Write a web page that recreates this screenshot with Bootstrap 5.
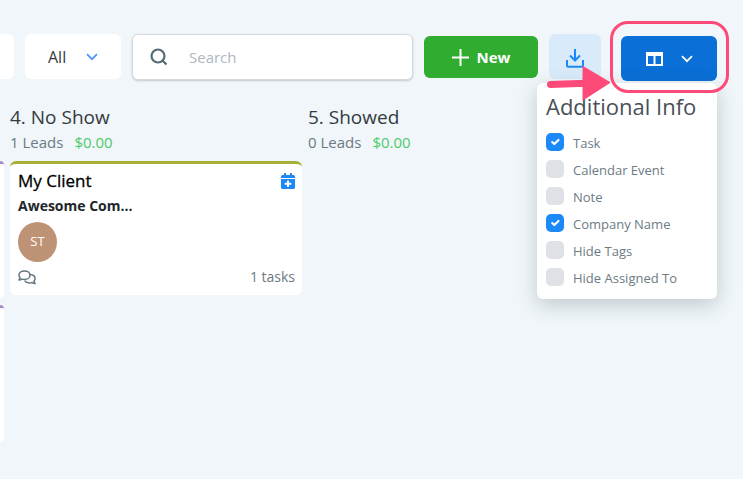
<!DOCTYPE html>
<html lang="en">
<head>
<meta charset="utf-8">
<meta name="viewport" content="width=device-width, initial-scale=1">
<title>Leads board</title>
<link rel="stylesheet" href="https://cdn.jsdelivr.net/npm/bootstrap@5.3.0/dist/css/bootstrap.min.css">
<style>
body { background: #f0f6f9; font-family: "Open Sans", "Noto Sans", sans-serif; color: #343a40; font-size: 14px; min-height: 100vh; overflow-x: hidden; }
.toolbar { padding: 34px 26px 0 0; gap: 11px; height: 82px; align-items: flex-start; }
.tool { border: 0; border-radius: 6px; height: 45px; flex: none; }
.tool-stub { width: 14px; background: #fff; border-radius: 0 6px 6px 0; }
.tool-all { width: 96px; background: #fff; font-size: 16px; color: #343a40; padding: 0 23px; }
.search-box { height: 46px; min-width: 0; background: #fff; border: 1px solid #d3d9df; border-radius: 6px; box-shadow: 0 1px 2px rgba(60, 70, 80, .25); padding: 0 17px; gap: 21px; }
.search-box input { min-width: 0; border: 0; padding: 0; font-size: 15px; background: transparent; box-shadow: none; }
.search-box input:focus { box-shadow: none; }
.search-box input::placeholder { color: #adb8c0; }
.tool-new { width: 114px; height: 42px; margin-top: 2px; background: #30ad30; color: #fff; font-size: 15px; font-weight: 700; gap: 8px; }
.tool-new:hover { background: #2a9a2a; color: #fff; }
.tool-save { width: 52px; background: #d9ebfb; padding: 3px 0 0; }
.columns-menu { margin: 2px 0 0 9px; }
.tool-columns { width: 96px; background: #0a6fd6; gap: 18px; }
.tool-columns:hover { background: #0863c0; }
.info-menu { position: absolute; display: block; top: 47px; right: 0; left: auto; width: 180px; border: 0; border-radius: 6px; padding: 7px 9px 9px; box-shadow: 0 6px 20px rgba(50, 70, 80, .25); }
.info-title { font-size: 22px; line-height: 32px; color: #495057; margin: 0 0 6px; white-space: nowrap; }
.check-row { height: 27px; gap: 9px; }
.check-row label { font-size: 13px; line-height: 24px; color: #6c7a83; padding-top: 3px; white-space: nowrap; }
.check-row .form-check-input { width: 18px; height: 18px; margin: 0; border: 0; border-radius: 5px; background-color: #dee2e6; flex: none; }
.check-row .form-check-input:checked { background-color: #1b8af8; background-size: 14px; }
.highlight-ring { position: absolute; inset: -15px -12px -12px -11px; border: 3px solid #fe4a78; border-radius: 18px; pointer-events: none; z-index: 1100; }
.pointer-arrow { position: absolute; top: 29px; left: -75px; z-index: 1101; pointer-events: none; }
.board { display: grid; grid-template-columns: 4px minmax(0, 292px) minmax(0, 292px); gap: 6px; padding-top: 22px; }
.column-head { height: 57px; }
.column-title { font-size: 19px; line-height: 26px; margin: 0; font-weight: 400; color: #343a40; }
.column-sum { font-size: 15px; line-height: 24px; color: #6c7a83; gap: 11px; }
.money { color: #4fca6a; }
.lead-card { background: #fff; border-top: 3px solid #a6b035; border-radius: 6px; padding: 5px 7px 6px 8px; }
.lead-name { font-size: 17px; line-height: 24px; font-weight: 400; color: #000; -webkit-text-stroke: .3px #000; margin: 0; }
.lead-company { font-size: 14px; line-height: 24px; font-weight: 700; color: #212529; margin: 1px 0 4px; }
.avatar { width: 39px; height: 40px; border-radius: 50%; background: #bd9275; color: #fff; font-size: 13px; margin-bottom: 3px; }
.lead-foot { font-size: 14px; line-height: 24px; color: #6c7a83; }
.prev-card { background: #fff; border-top: 3px solid #a58fc4; border-radius: 0 6px 6px 0; height: 137px; margin-bottom: 7px; }
</style>
</head>
<body>
<header class="toolbar d-flex">
  <div class="tool tool-stub"></div>
  <button type="button" class="tool tool-all btn d-flex align-items-center justify-content-between">All
    <svg width="12" height="8" viewBox="0 0 12 8" fill="none" stroke="#4f97fa" stroke-width="1.8" aria-hidden="true"><path d="M1 1.2 6 6.2l5-5"/></svg>
  </button>
  <div class="search-box d-flex align-items-center flex-grow-1">
    <svg class="flex-shrink-0" width="18" height="18" viewBox="0 0 18 18" fill="none" stroke="#566a75" stroke-width="2.2" aria-hidden="true"><circle cx="8" cy="8" r="6.5"/><path d="m12 12 4.5 4.5"/></svg>
    <input type="text" class="form-control" placeholder="Search" aria-label="Search">
  </div>
  <button type="button" class="tool tool-new btn d-flex align-items-center justify-content-center">
    <svg width="17" height="17" viewBox="0 0 17 17" stroke="#fff" stroke-width="2" aria-hidden="true"><path d="M8.500 0v17M0 8.500h17"/></svg>New
  </button>
  <button type="button" class="tool tool-save btn d-flex align-items-center justify-content-center" aria-label="Download">
    <svg width="18" height="19" viewBox="0 0 18 19" fill="none" stroke="#1b8af8" stroke-width="2" aria-hidden="true"><path d="M9 0v11M4 6.500l5 5 5-5M1 11v5.500q0 1.200 1.200 1.200h13.600q1.200 0 1.200-1.200V11"/></svg>
  </button>
  <div class="columns-menu position-relative">
    <button type="button" class="tool tool-columns btn d-flex align-items-center justify-content-center p-0" aria-label="Columns" aria-expanded="true">
      <svg width="17" height="14" viewBox="0 0 17 14" aria-hidden="true"><path fill="#fff" fill-rule="evenodd" d="M0 0h17v14H0zM2 4v8h5.500V4zM9.500 4v8H15V4z"/></svg>
      <svg width="12" height="8" viewBox="0 0 12 8" fill="none" stroke="#fff" stroke-width="1.8" aria-hidden="true"><path d="M1 1.200 6 6.200l5-5"/></svg>
    </button>
    <div class="info-menu dropdown-menu show">
      <h2 class="info-title fw-normal">Additional Info</h2>
      <div class="check-row d-flex align-items-center"><input class="form-check-input" type="checkbox" id="c-task" checked><label for="c-task">Task</label></div>
      <div class="check-row d-flex align-items-center"><input class="form-check-input" type="checkbox" id="c-event"><label for="c-event">Calendar Event</label></div>
      <div class="check-row d-flex align-items-center"><input class="form-check-input" type="checkbox" id="c-note"><label for="c-note">Note</label></div>
      <div class="check-row d-flex align-items-center"><input class="form-check-input" type="checkbox" id="c-company" checked><label for="c-company">Company Name</label></div>
      <div class="check-row d-flex align-items-center"><input class="form-check-input" type="checkbox" id="c-tags"><label for="c-tags">Hide Tags</label></div>
      <div class="check-row d-flex align-items-center"><input class="form-check-input" type="checkbox" id="c-assigned"><label for="c-assigned">Hide Assigned To</label></div>
    </div>
    <div class="highlight-ring"></div>
    <svg class="pointer-arrow" width="65" height="36" viewBox="0 0 65 36" aria-hidden="true"><path d="M4.500 19.500 40 18.300" stroke="#fe4a78" stroke-width="7" stroke-linecap="round"/><path d="M37 1.500 64 17.500 37 35z" fill="#fe4a78" stroke="#fe4a78" stroke-linejoin="round"/></svg>
  </div>
</header>
<main class="board">
  <section>
    <div class="column-head"></div>
    <div class="prev-card"></div>
    <div class="prev-card"></div>
  </section>
  <section>
    <div class="column-head">
      <h2 class="column-title">4. No Show</h2>
      <div class="column-sum d-flex"><span>1 Leads</span><span class="money">$0.00</span></div>
    </div>
    <article class="lead-card">
      <div class="d-flex justify-content-between align-items-center">
        <h3 class="lead-name">My Client</h3>
        <svg width="14" height="16" viewBox="0 0 14 16" aria-hidden="true"><path fill="#1b8af8" d="M3 0h2v2h4V0h2v2h1.500Q14 2 14 3.500V5H0V3.500Q0 2 1.500 2H3zM0 6h14v8.500Q14 16 12.500 16h-11Q0 16 0 14.500z"/><path stroke="#fff" stroke-width="2" d="M7 7.500v6.500M3.700 10.800h6.600"/></svg>
      </div>
      <div class="lead-company">Awesome Com...</div>
      <div class="avatar d-flex align-items-center justify-content-center">ST</div>
      <div class="lead-foot d-flex justify-content-between align-items-center">
        <svg width="18" height="15" viewBox="0 0 18 15" fill="none" stroke="#647680" stroke-width="1.500" stroke-linejoin="round" aria-hidden="true"><path d="M6.500 1C3.300 1 1 2.800 1 5.200c0 1 .4 1.900 1.100 2.600L.9 10c1.200 0 2.300-.4 3.100-.9.800.3 1.600.4 2.500.4C9.700 9.500 12 7.600 12 5.200S9.700 1 6.500 1z"/><path d="M12 4.500c2.900.1 5 1.800 5 4.200 0 1-.4 1.900-1.100 2.600l1.200 2.200c-1.200 0-2.300-.4-3.100-.9-.8.300-1.600.4-2.500.4-2.200 0-4-.9-4.900-2.300"/></svg>
        <span>1 tasks</span>
      </div>
    </article>
  </section>
  <section>
    <div class="column-head">
      <h2 class="column-title">5. Showed</h2>
      <div class="column-sum d-flex"><span>0 Leads</span><span class="money">$0.00</span></div>
    </div>
  </section>
</main>
<script src="https://cdn.jsdelivr.net/npm/bootstrap@5.3.0/dist/js/bootstrap.bundle.min.js"></script>
</body>
</html>
